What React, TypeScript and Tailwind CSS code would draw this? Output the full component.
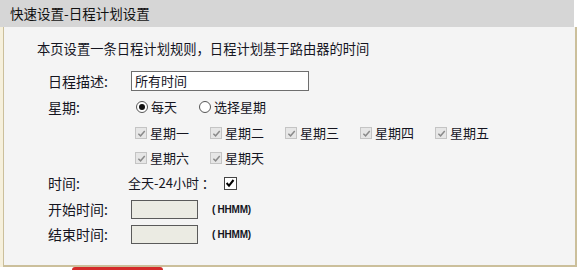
const font = { fontFamily: '"Noto Sans CJK SC", "Liberation Sans", sans-serif' };

function GrayCheck({ label }: { label: string }) {
  return (
    <div className="flex w-[75px] items-center">
      <span className="grid h-[12px] w-[12px] place-items-center border border-[#c4c4c4] bg-[#e6e6e6]">
        <svg viewBox="0 0 10 10" className="h-[9px] w-[9px]">
          <path d="M1.5 5.2 L4 7.6 L8.6 2.2" fill="none" stroke="#8a8a8a" strokeWidth="1.6" />
        </svg>
      </span>
      <span className="ml-[3px] text-[13px]">{label}</span>
    </div>
  );
}

function Radio({ checked, label }: { checked?: boolean; label: string }) {
  return (
    <div className="flex items-center">
      <span className="grid h-[12px] w-[12px] place-items-center rounded-full border border-[#555] bg-white">
        {checked ? <span className="h-[6px] w-[6px] rounded-full bg-[#111]" /> : null}
      </span>
      <span className="ml-[3px] text-[13px]">{label}</span>
    </div>
  );
}

function Row({ label, height, children }: { label: string; height: string; children?: React.ReactNode }) {
  return (
    <div className={`flex items-center pl-[44px] ${height}`}>
      <div className="w-[83px] text-[14px]">{label}</div>
      {children}
    </div>
  );
}

export default function App() {
  const week1 = ["星期一", "星期二", "星期三", "星期四", "星期五"];
  const week2 = ["星期六", "星期天"];

  return (
    <div className="h-[270px] w-[581px] overflow-hidden bg-white text-[#15151f]" style={font}>
      <div className="flex h-[27px] w-[574px] items-center bg-[#d6d6d6] pl-[10px] text-[13.5px] text-[#111]">
        快速设置-日程计划设置
      </div>

      <div className="flex">
        <div className="w-[3px] bg-[#f6f0dc]" />
        <div className="h-[240px] w-[574px] border-r-2 border-b-2 border-l border-[#cbbf9b] bg-[#f4f4f4]">
          <div className="mt-[12px] flex h-[20px] items-center pl-[33px] text-[13.3px]">
            本页设置一条日程计划规则，日程计划基于路由器的时间
          </div>

          <div className="mt-[9px]">
            <Row label="日程描述:" height="h-[26px]">
              <div className="flex h-[20px] w-[178px] items-center border border-[#6e6e6e] bg-white pl-[3px] text-[13px]">
                所有时间
              </div>
            </Row>

            <Row label="星期:" height="h-[26px]">
              <div className="ml-[5px] flex gap-[22px]">
                <Radio checked label="每天" />
                <Radio label="选择星期" />
              </div>
            </Row>

            <div className="flex h-[26px] items-center pl-[131px]">
              {week1.map((d) => (
                <GrayCheck key={d} label={d} />
              ))}
            </div>
            <div className="flex h-[24px] items-center pl-[131px]">
              {week2.map((d) => (
                <GrayCheck key={d} label={d} />
              ))}
            </div>

            <Row label="时间:" height="h-[26px]">
              <span className="-ml-[3px] text-[13px]">全天-24小时 ：</span>
              <span className="ml-[9px] grid h-[13px] w-[13px] place-items-center border border-[#444] bg-white">
                <svg viewBox="0 0 10 10" className="h-[10px] w-[10px]">
                  <path d="M1.6 5 L4 7.6 L8.5 2" fill="none" stroke="#000" strokeWidth="2" />
                </svg>
              </span>
            </Row>

            <Row label="开始时间:" height="h-[26px]">
              <div className="h-[19px] w-[67px] border border-[#5a5a5a] bg-[#ebebe3]" />
              <span className="ml-[14px] text-[10px] font-bold tracking-tight" style={{ fontFamily: '"Liberation Sans", sans-serif' }}>
                ( HHMM)
              </span>
            </Row>
            <Row label="结束时间:" height="h-[25px]">
              <div className="h-[19px] w-[67px] border border-[#5a5a5a] bg-[#ebebe3]" />
              <span className="ml-[14px] text-[10px] font-bold tracking-tight" style={{ fontFamily: '"Liberation Sans", sans-serif' }}>
                ( HHMM)
              </span>
            </Row>
          </div>
        </div>
      </div>

      <div className="ml-[72px] h-[4px] w-[91px] rounded-t-[3px] bg-[#d42a2a]" />
    </div>
  );
}
